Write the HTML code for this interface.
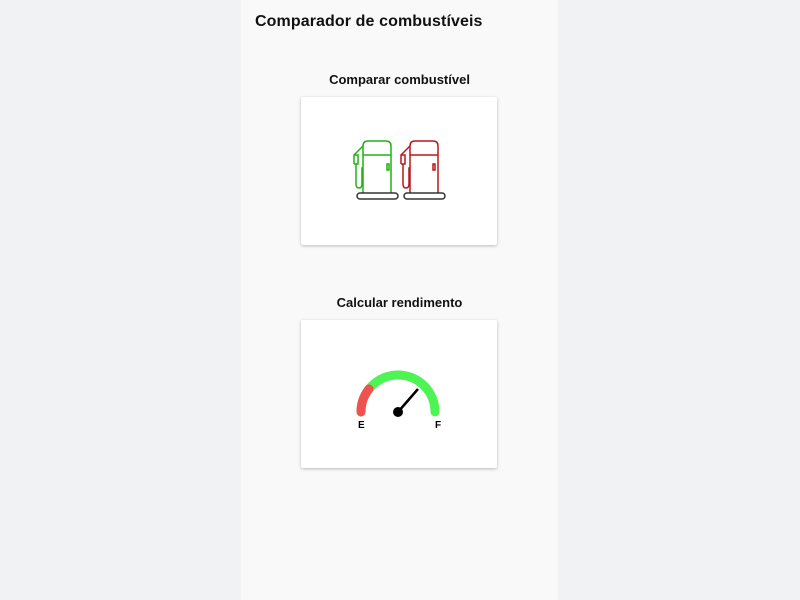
<!DOCTYPE html><html><head><style>
body{margin:0;width:800px;height:600px;background:#f1f2f4;font-family:"Liberation Sans",sans-serif;overflow:hidden;position:relative}
.panel{position:absolute;left:241px;top:0;width:317px;height:600px;background:#f9f9f9}
h1{position:absolute;left:14px;top:13px;margin:0;font-size:16px;font-weight:bold;color:#111;letter-spacing:0.1px}
.lbl{position:absolute;left:0;width:317px;text-align:center;font-size:13px;font-weight:bold;color:#111}
.card{position:absolute;left:60px;width:196px;height:148px;background:#fff;border-radius:2px;box-shadow:0 1px 3px rgba(0,0,0,.25)}
</style></head><body><div class="panel">
<h1>Comparador de combustíveis</h1>
<div class="lbl" style="top:72px">Comparar combustível</div>
<div class="card" style="top:97px">
<svg width="196" height="148" style="position:absolute;left:0;top:0" fill="none" stroke-width="1.5">
<g stroke="#22b014"><path d="M62 96V49q0-5 5-5h18q5 0 5 5V96M62 58H90"/><path d="M53 67V58l9-9M53 67h4V58l-4 0M55 67v20q0 4 3 4 3 0 3-4V71h1"/><rect x="86" y="67" width="2" height="6"/></g>
<g stroke="#b8181c"><path d="M109 96V49q0-5 5-5h18q5 0 5 5V96M109 58H137"/><path d="M100 67V58l9-9M100 67h4V58l-4 0M102 67v20q0 4 3 4 3 0 3-4V71h1"/><rect x="132" y="67" width="2" height="6"/></g>
<g stroke="#333"><rect x="56" y="96" width="41" height="6" rx="3"/><rect x="103" y="96" width="41" height="6" rx="3"/></g>
</svg></div>
<div class="lbl" style="top:295px">Calcular rendimento</div>
<div class="card" style="top:320px">
<svg width="196" height="148" style="position:absolute;left:0;top:0">
<path d="M60 92A37 37 0 0 1 134 92" fill="none" stroke="#4ef354" stroke-width="9" stroke-linecap="round"/>
<path d="M60 92A37 37 0 0 1 68 69" fill="none" stroke="#f0514f" stroke-width="9" stroke-linecap="round"/>
<line x1="97" y1="92" x2="117" y2="69" stroke="#000" stroke-width="2.5"/>
<circle cx="97" cy="92" r="5" fill="#000"/>
<text x="57" y="108" font-size="10" font-weight="bold" font-family="Liberation Sans">E</text>
<text x="134" y="108" font-size="10" font-weight="bold" font-family="Liberation Sans">F</text>
</svg></div>
</div></body></html>
